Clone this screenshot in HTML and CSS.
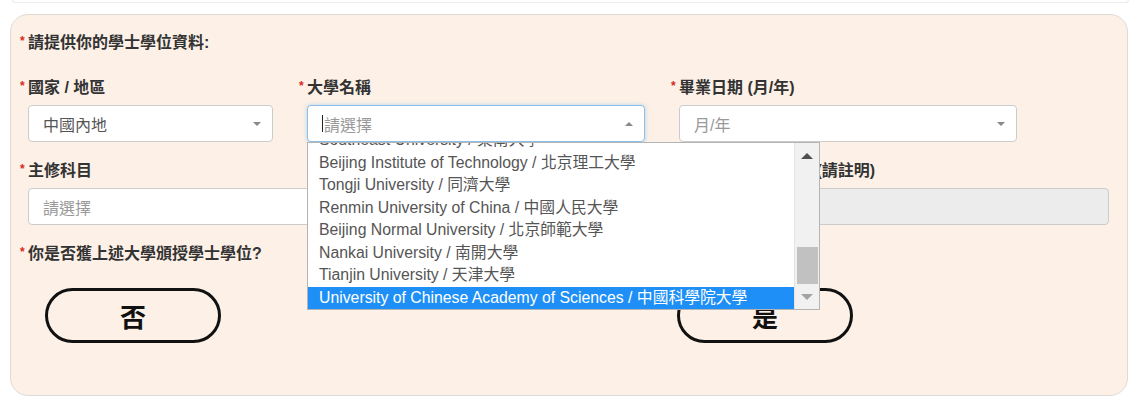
FILE: index.html
```html
<!DOCTYPE html>
<html lang="zh-Hant">
<head>
    <meta charset="UTF-8">
    <meta name="viewport" content="width=device-width, initial-scale=1.0">
    <title>學士學位資料</title>
    <link rel="stylesheet" href="styles.css">
</head>
<body>
    <div class="prev-card"></div>

    <div class="card">
        <div class="section-title"><span class="req">*</span>請提供你的學士學位資料:</div>

        <div class="row row-three">
            <div class="field">
                <label class="label"><span class="req">*</span>國家 / 地區</label>
                <div class="select">
                    <span class="value">中國內地</span>
                    <span class="caret"></span>
                </div>
            </div>

            <div class="field">
                <label class="label"><span class="req">*</span>大學名稱</label>
                <div class="select-wrap">
                    <div class="select is-open">
                        <span class="placeholder"><span class="text-cursor"></span>請選擇</span>
                        <span class="caret up"></span>
                    </div>
                    <div class="dropdown">
                        <ul class="options">
                            <li>Southeast University / 東南大學</li>
                            <li>Beijing Institute of Technology / 北京理工大學</li>
                            <li>Tongji University / 同濟大學</li>
                            <li>Renmin University of China / 中國人民大學</li>
                            <li>Beijing Normal University / 北京師範大學</li>
                            <li>Nankai University / 南開大學</li>
                            <li>Tianjin University / 天津大學</li>
                            <li class="active">University of Chinese Academy of Sciences / 中國科學院大學</li>
                        </ul>
                        <div class="scrollbar">
                            <span class="arrow arrow-up"></span>
                            <div class="track"><div class="thumb"></div></div>
                            <span class="arrow arrow-down"></span>
                        </div>
                    </div>
                </div>
            </div>

            <div class="field">
                <label class="label"><span class="req">*</span>畢業日期 (月/年)</label>
                <div class="select">
                    <span class="placeholder">月/年</span>
                    <span class="caret"></span>
                </div>
            </div>
        </div>

        <div class="row row-two">
            <div class="field">
                <label class="label"><span class="req">*</span>主修科目</label>
                <div class="select">
                    <span class="placeholder">請選擇</span>
                    <span class="caret"></span>
                </div>
            </div>
            <div class="field">
                <label class="label">其他主修科目名稱 (請註明)</label>
                <div class="input is-disabled"></div>
            </div>
        </div>

        <div class="row">
            <label class="label"><span class="req">*</span>你是否獲上述大學頒授學士學位?</label>
        </div>

        <div class="answers">
            <button class="pill">否</button>
            <button class="pill">是</button>
        </div>
    </div>
</body>
</html>
```

FILE: styles.css
```css
body {
    margin: 0;
    background: #fff;
    font-family: "Liberation Sans", "Noto Sans CJK TC", sans-serif;
    color: #333;
}
.prev-card {
    height: 2px;
    margin: 0 14px 0 12px;
    border: 1px solid #ececec;
    border-top: none;
    border-radius: 0 0 8px 8px;
}
.card {
    margin: 11px 15px 0 10px;
    padding: 18px 9px 52px 9px;
    background: #fdf1e7;
    border: 1px solid #dedad6;
    border-radius: 18px;
}
.section-title,
.label {
    display: block;
    font-size: 16px;
    font-weight: bold;
    line-height: 20px;
    color: #333;
    white-space: nowrap;
}
.req {
    display: inline-block;
    width: 8px;
    color: #d9261c;
    font-size: 12px;
    vertical-align: top;
    line-height: 16px;
}
.row-three {
    display: grid;
    grid-template-columns: 253px 346px 346px;
    column-gap: 26px;
    margin-top: 25px;
}
.row-two {
    display: grid;
    grid-template-columns: 625px 437px;
    column-gap: 27px;
    margin-top: 19px;
}
.row {
    margin-top: 19px;
}
.row-three.row {
    margin-top: 25px;
}
.field .label {
    margin-bottom: 7px;
}
.row-two .field:last-child .label {
    padding-left: 12px;
}
.select,
.input {
    box-sizing: border-box;
    display: flex;
    align-items: center;
    justify-content: space-between;
    height: 37px;
    margin-left: 8px;
    padding: 0 11px 0 14px;
    background: #fff;
    border: 1px solid #ccc;
    border-radius: 4px;
    font-size: 16px;
    color: #555;
}
.input.is-disabled {
    background: #ececec;
}
.select.is-open {
    border-color: #8dbfe9;
    box-shadow: 0 0 4px rgba(102, 175, 233, 0.5);
}
.placeholder {
    display: flex;
    align-items: center;
    color: #999;
}
.text-cursor {
    display: inline-block;
    width: 1px;
    height: 17px;
    background: #222;
    margin-right: 1px;
}
.caret {
    width: 0;
    height: 0;
    border-left: 4.5px solid transparent;
    border-right: 4.5px solid transparent;
    border-top: 4.5px solid #888;
}
.caret.up {
    border-top: none;
    border-bottom: 4.5px solid #888;
}
.select-wrap {
    position: relative;
}
.dropdown {
    position: absolute;
    top: 100%;
    left: 8px;
    z-index: 5;
    display: flex;
    width: 513px;
    height: 168px;
    box-sizing: border-box;
    background: #fff;
    border: 1px solid #b4b4b4;
    overflow: hidden;
}
.options {
    flex: 1;
    margin: -13.75px 0 0 0;
    padding: 0;
    list-style: none;
    font-size: 15.8px;
    color: #555;
}
.options li {
    height: 22.5px;
    line-height: 22.5px;
    padding-left: 11px;
    white-space: nowrap;
}
.options li.active {
    background: #1e8ff7;
    color: #fff;
}
.scrollbar {
    width: 24px;
    display: flex;
    flex-direction: column;
    align-items: center;
    background: #f1f1f1;
    border-left: 1px solid #e4e4e4;
}
.arrow {
    width: 0;
    height: 0;
    border-left: 6px solid transparent;
    border-right: 6px solid transparent;
}
.arrow-up {
    margin: 10px 0 6px;
    border-bottom: 6px solid #505050;
}
.arrow-down {
    margin: 6px 0 9px;
    border-top: 6px solid #a3a3a3;
}
.track {
    flex: 1;
    width: 100%;
    display: flex;
    flex-direction: column;
    justify-content: flex-end;
    align-items: center;
}
.thumb {
    width: 21px;
    height: 37px;
    margin-bottom: 4px;
    background: #c1c1c1;
}
.answers {
    display: grid;
    grid-template-columns: 632px 176px;
    padding-left: 25px;
    margin-top: 24px;
}
.pill {
    width: 176px;
    height: 55px;
    background: transparent;
    border: 3px solid #111;
    border-radius: 28px;
    font-family: "Liberation Sans", "Noto Sans CJK TC", sans-serif;
    font-size: 26px;
    font-weight: bold;
    color: #111;
    cursor: pointer;
}
```
